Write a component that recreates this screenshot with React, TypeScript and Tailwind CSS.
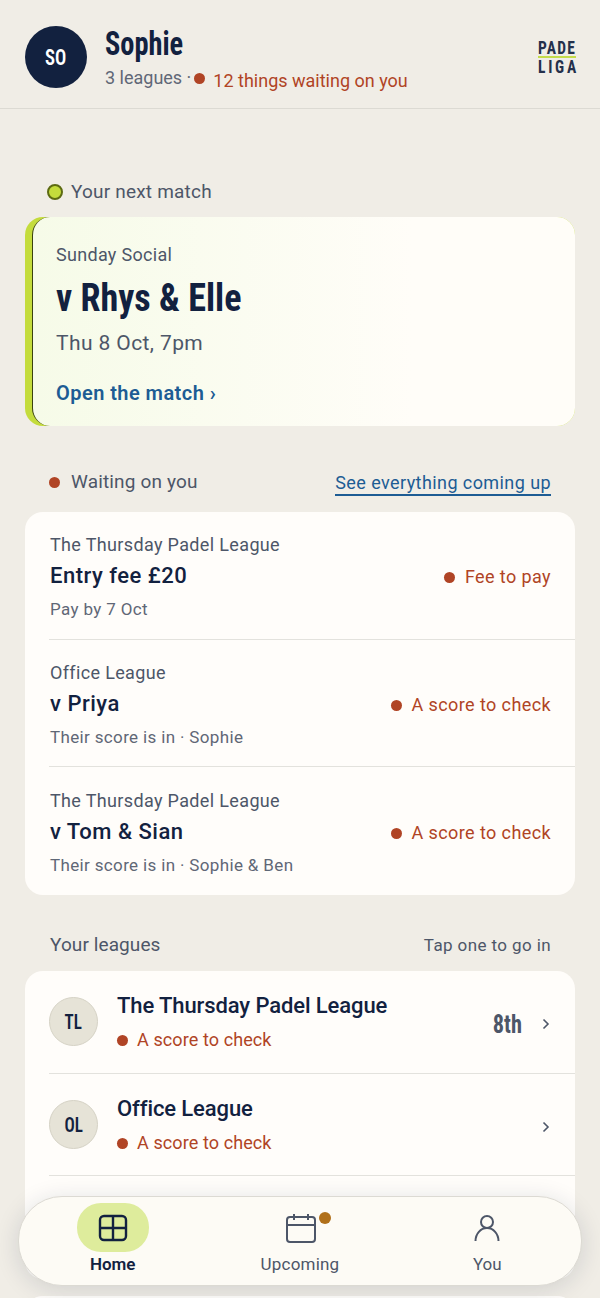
const body = { fontFamily: '"Roboto", "Liberation Sans", sans-serif' };
const condensed = { fontFamily: '"Roboto", "Liberation Sans", sans-serif', fontStretch: "75%" };

function Dot({ className = "" }: { className?: string }) {
  return <span className={`block size-[11px] shrink-0 rounded-full bg-[#b04425] ${className}`} />;
}

function Status({ label, className = "gap-[10px] tracking-[0.4px]" }: { label: string; className?: string }) {
  return (
    <div className={`flex items-center text-[18px] leading-[24px] text-[#b04425] ${className}`}>
      <Dot />
      <span>{label}</span>
    </div>
  );
}

function WaitingRow({ league, title, note, status, last }: { league: string; title: string; note: string; status: string; last?: boolean }) {
  return (
    <div className={`flex h-[127.7px] items-center justify-between pt-[4px] pr-6 ${last ? "" : "border-b border-[#e3e2dd]"}`}>
      <div className="ml-px">
        <div className="text-[18px] leading-[24px] tracking-[0.35px] text-[#4d5668]">{league}</div>
        <div className="mt-[4px] text-[22px] leading-[30px] font-medium tracking-[0.5px] text-[#12213f]">{title}</div>
        <div className="mt-[6px] text-[17px] leading-[24px] tracking-[0.35px] text-[#5f6776]">{note}</div>
      </div>
      <Status label={status} />
    </div>
  );
}

function LeagueRow({ initials, name, status, rank }: { initials: string; name: string; status?: string; rank?: string }) {
  return (
    <div className="flex h-[102.7px] items-center border-b border-[#e3e2dd] pr-6">
      <div className="flex size-[49px] shrink-0 items-center justify-center rounded-full border border-[#d5d2c5] bg-[#e6e3d7] text-[#12213f]">
        <span className="scale-x-[0.85] text-[20px] font-semibold" style={condensed}>
          {initials}
        </span>
      </div>
      <div className="ml-[19px] flex-1">
        <div className="text-[22px] leading-[30px] font-medium tracking-[-0.1px] text-[#12213f]">{name}</div>
        {status && (
          <div className="mt-[7px]">
            <Status label={status} className="gap-[9px] tracking-[0.1px]" />
          </div>
        )}
      </div>
      {rank && (
        <span className="mt-[5px] mr-[19px] origin-right scale-x-[0.86] text-[26px] leading-[30px] font-bold text-[#4d5668]" style={condensed}>
          {rank}
        </span>
      )}
      <svg width="10" height="14" viewBox="0 0 10 14" fill="none" stroke="#4d5668" strokeWidth="1.6" className="mt-[5px]">
        <path d="M2.500 2.500 7 7l-4.500 4.500" />
      </svg>
    </div>
  );
}

export default function App() {
  return (
    <div className="relative h-[1298px] w-[600px] overflow-hidden bg-[#f0ede6]" style={body}>
      <header className="flex h-[109px] items-start border-b border-[#dcdad3] pt-[26px] pl-[25px] pr-6">
        <div className="flex size-[62px] items-center justify-center rounded-full bg-[#12213f] text-white">
          <span className="scale-x-[0.85] text-[22px] font-semibold" style={condensed}>
            SO
          </span>
        </div>
        <div className="ml-[18px] flex-1">
          <div className="origin-left scale-x-[0.86] text-[33px] leading-[36px] font-bold text-[#12213f]" style={condensed}>
            Sophie
          </div>
          <div className="flex items-center text-[18px] leading-[26px] text-[#5f6776]">
            <span>3 leagues ·</span>
            <Dot className="ml-[3px]" />
            <span className="mt-[6px] ml-[8px] text-[#b04425]">12 things waiting on you</span>
          </div>
        </div>
        <div className="mt-[14px] flex w-[38px] flex-col text-[18px] font-bold text-[#24304b]" style={condensed}>
          <span className="origin-left scale-x-[0.86] leading-[16px] tracking-[1.500px] whitespace-nowrap">PADE</span>
          <span className="h-[2px] bg-[#c4dc4a]" />
          <span className="origin-left scale-x-[0.86] leading-[17px] tracking-[3.200px] whitespace-nowrap">LIGA</span>
        </div>
      </header>

      <main className="px-[25px]">
        <div className="mt-[70px] flex items-center pl-[22px] text-[19px] leading-[26px] tracking-[0.2px] text-[#4d5668]">
          <span className="mr-2 size-4 rounded-full border-2 border-[#5d6b12] bg-[#c4dc3c]" />
          Your next match
        </div>

        <section className="mt-[12px] h-[209px] rounded-[18px] bg-[#c4dc3c]">
          <div className="ml-[7px] h-full rounded-[18px] border-l border-[#39420f] bg-gradient-to-r from-[#f6fbe8] to-[#fffdf8] to-70% pt-[25px] pl-[23px]">
            <div className="text-[18px] leading-[26px] tracking-[0.3px] text-[#4d5668]">Sunday Social</div>
            <div className="mt-[8px] origin-left scale-x-[0.95] text-[38px] leading-[44px] font-bold text-[#12213f]" style={condensed}>
              v Rhys &amp; Elle
            </div>
            <div className="mt-[9px] text-[21px] leading-[28px] tracking-[0.4px] text-[#4d5668]">Thu 8 Oct, 7pm</div>
            <div className="mt-[22px] text-[20px] leading-[28px] font-semibold tracking-[0.45px] text-[#1d5c94]">Open the match ›</div>
          </div>
        </section>

        <div className="mt-[43px] flex h-[26px] items-center justify-between px-6 text-[#4d5668]">
          <div className="flex items-center gap-[11px] text-[19px] leading-[26px] tracking-[0.15px]">
            <Dot />
            Waiting on you
          </div>
          <a className="mt-[4px] border-b-2 border-[#1d5c94] text-[18px] leading-[22px] tracking-[0.42px] text-[#1d5c94]">See everything coming up</a>
        </div>

        <section className="mt-[17px] overflow-hidden rounded-[18px] bg-[#fffdfa] pl-6">
          <WaitingRow league="The Thursday Padel League" title="Entry fee £20" note="Pay by 7 Oct" status="Fee to pay" />
          <WaitingRow league="Office League" title="v Priya" note="Their score is in · Sophie" status="A score to check" />
          <WaitingRow league="The Thursday Padel League" title="v Tom & Sian" note="Their score is in · Sophie & Ben" status="A score to check" last />
        </section>

        <div className="mt-[37px] flex justify-between pr-6 pl-[25px] text-[#4d5668]">
          <span className="text-[19px] leading-[26px] tracking-[0.1px]">Your leagues</span>
          <span className="text-[17px] leading-[26px] tracking-[0.4px]">Tap one to go in</span>
        </div>

        <section className="mt-[13px] h-[308px] overflow-hidden rounded-[18px] bg-[#fffdfa] pl-6">
          <LeagueRow initials="TL" name="The Thursday Padel League" status="A score to check" rank="8th" />
          <LeagueRow initials="OL" name="Office League" status="A score to check" />
        </section>

        <section className="mt-[17px] h-[100px] rounded-[18px] bg-[#fffdfa]" />
      </main>

      <nav className="absolute top-[1196px] left-[18px] flex h-[90px] w-[564px] rounded-[44px] border border-[#dcdad3] bg-[#fdfbf5] shadow-[0_4px_24px_rgba(18,33,63,0.14)]">
        <div className="flex w-[188px] flex-col items-center pt-[6px]">
          <div className="flex h-[49px] w-[72px] items-center justify-center rounded-[24px] bg-[#deec9c]">
            <svg width="30" height="30" viewBox="0 0 30 30" fill="none" stroke="#12213f" strokeWidth="2.400">
              <rect x="2" y="3" width="26" height="24" rx="4" />
              <path d="M15 3v24M2 15h26" />
            </svg>
          </div>
          <span className="text-[17px] leading-[24px] font-semibold text-[#12213f]">Home</span>
        </div>
        <div className="flex w-[188px] flex-col items-center pt-[6px]">
          <div className="relative ml-[2px] flex h-[49px] items-center justify-center">
            <svg width="30" height="30" viewBox="0 0 30 30" fill="none" stroke="#4d5668" strokeWidth="2">
              <rect x="1" y="4" width="28" height="25" rx="3" />
              <path d="M1 12h28M8 1v6M22 1v6" />
            </svg>
            <span className="absolute top-[9px] -right-[15px] size-[12px] rounded-full bg-[#b0701a]" />
          </div>
          <span className="text-[17px] leading-[24px] tracking-[0.2px] text-[#4d5668]">Upcoming</span>
        </div>
        <div className="flex w-[188px] flex-col items-center pt-[6px]">
          <div className="flex h-[49px] items-center justify-center">
            <svg width="26" height="28" viewBox="0 0 26 28" fill="none" stroke="#4d5668" strokeWidth="2" className="mt-[1px]">
              <circle cx="13" cy="8" r="6" />
              <path d="M1.500 27A11.500 13 0 0 1 24.500 27" />
            </svg>
          </div>
          <span className="text-[17px] leading-[24px] text-[#4d5668]">You</span>
        </div>
      </nav>
    </div>
  );
}
